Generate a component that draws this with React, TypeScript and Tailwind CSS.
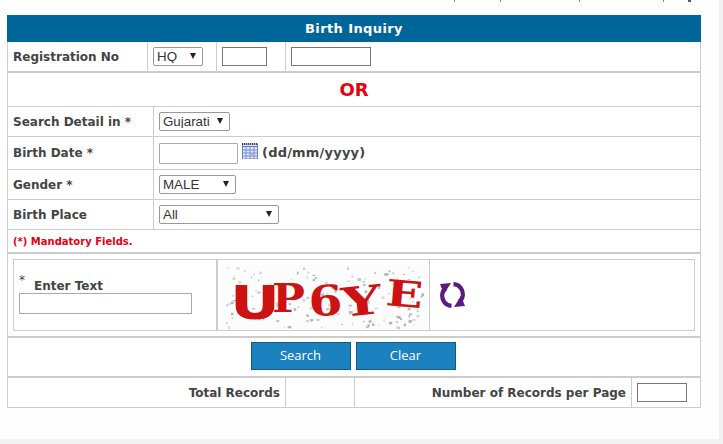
const verdana = "font-['DejaVu_Sans',sans-serif]"

// deterministic speckles for the captcha picture
let seed = 7
const rnd = () => {
  seed = (seed * 16807) % 2147483647
  return seed / 2147483647
}
const speckles = Array.from({ length: 170 }, () => ({
  x: 4 + rnd() * 198,
  y: 2 + rnd() * 60,
  w: 1 + rnd() * 2.5,
  h: 1 + rnd() * 2,
  o: 0.35 + rnd() * 0.6,
}))

function Label({ children }: { children: React.ReactNode }) {
  return <span className={`${verdana} text-[12px] font-bold text-[#444]`}>{children}</span>
}

function Select({ className, value }: { className: string; value: string }) {
  return (
    <div className={`relative h-[19px] ${className}`}>
      <select className="block h-full w-full appearance-none rounded-[2px] border border-[#999] bg-white pl-[3px] font-['Liberation_Sans',sans-serif] text-[13.33px] leading-none text-[#333]">
        <option>{value}</option>
      </select>
      <svg width="6" height="6" viewBox="0 0 6 6" className="pointer-events-none absolute right-[7px] top-[6px]">
        <path d="M0 0h6L3 6z" fill="#222" />
      </svg>
    </div>
  )
}

function FormRow({ label, height, children }: { label: string; height: string; children: React.ReactNode }) {
  return (
    <div className={`flex border-b border-[#ccc] ${height}`}>
      <div className="flex w-[146px] shrink-0 items-center border-r border-[#ccc] pl-[5px]">
        <Label>{label}</Label>
      </div>
      <div className="flex items-center pl-[5px]">{children}</div>
    </div>
  )
}

function CalendarIcon() {
  return (
    <svg width="16" height="16" viewBox="0 0 16 16" className="mb-[4px]">
      <rect x="0.5" y="1" width="15" height="15" fill="#e4eafb" stroke="#6a7fc0" />
      <path d="M0 1h16" stroke="#3d4658" strokeWidth="2" strokeDasharray="1 1" />
      <path d="M0 3.5h16" stroke="#5f78c4" />
      <path d="M0 7h16M0 10h16M0 13h16M4 3v13M8 3v13M12 3v13" stroke="#6f8ae0" strokeWidth="1" />
      <rect x="9" y="11" width="3" height="2" fill="#e8a070" />
    </svg>
  )
}

function RefreshIcon() {
  return (
    <svg width="25" height="26" viewBox="0 0 25 26" fill="none">
      <g stroke="#5c1a80" strokeWidth="4.2">
        <path d="M11.5 23.8C5 23.5 1.5 18 2.3 12C2.8 9 4.5 7 6 6" />
        <path d="M13.5 2.2C20 2.5 23.5 8 22.7 14C22.2 17 20.5 19 19 20" />
      </g>
      <g fill="#5c1a80">
        <path d="M0 2 11 1 4 12z" />
        <path d="M25 24 14 25 21 14z" />
      </g>
    </svg>
  )
}

function Captcha() {
  return (
    <svg width="205" height="64" viewBox="0 0 205 64" className="overflow-visible">
      <rect width="205" height="64" fill="#fcfcfc" />
      {speckles.map((s, i) => (
        <rect key={i} x={s.x} y={s.y} width={s.w} height={s.h} fill="#9fada8" opacity={s.o} />
      ))}
      <g fill="#cc1212" fontFamily="'DejaVu Serif', serif" fontWeight="bold">
        <text x="8" y="54" fontFamily="'DejaVu Sans', sans-serif" fontSize="46" textLength="50" lengthAdjust="spacingAndGlyphs">U</text>
        <text x="50" y="47" fontSize="40" textLength="33" lengthAdjust="spacingAndGlyphs">P</text>
        <text x="87" y="51" fontSize="42" textLength="34" lengthAdjust="spacingAndGlyphs" transform="rotate(-2 87 51)">6</text>
        <text x="121" y="52" fontSize="40" textLength="40" lengthAdjust="spacingAndGlyphs" transform="rotate(-6 121 52)">Y</text>
        <text x="163" y="40" fontSize="36" textLength="37" lengthAdjust="spacingAndGlyphs" transform="rotate(5 163 40)">E</text>
      </g>
    </svg>
  )
}

export default function App() {
  return (
    <div className="flex h-[444px] w-[723px] flex-col overflow-hidden bg-[#f2f2f2]">
      <div className="mr-[4px] h-[439px] bg-[#fefefe] pl-[7px]">
        {/* bottom edge of the nav row that is cut off above the form */}
        <div className="flex h-[15px] items-start">
          <span className="ml-[447px] h-[2px] w-px bg-[#888]" />
          <span className="ml-[45px] h-[2px] w-px bg-[#888]" />
          <span className="ml-[78px] h-[2px] w-px bg-[#888]" />
          <span className="ml-[83px] h-[2px] w-px bg-[#888]" />
          <span className="ml-[24px] h-[2px] w-[3px] bg-[#557]" />
        </div>

        <div className="w-[694px] border-x border-b border-[#ccc] bg-white">
          <div className={`${verdana} -mx-px flex h-[27px] items-center justify-center bg-[#006699] text-[13px] font-bold tracking-[0.4px] text-white`}>
            Birth Inquiry
          </div>

          <div className="flex h-[31px] border-b-2 border-[#ccc]">
            <div className="flex w-[140px] items-center border-r border-[#ccc] pl-[5px] pt-[1px]">
              <Label>Registration No</Label>
            </div>
            <div className="flex w-[69px] items-center border-r border-[#ccc] pl-[5px]">
              <Select className="w-[50px]" value="HQ" />
            </div>
            <div className="flex w-[69px] items-center border-r border-[#ccc] pl-[5px]">
              <input className="h-[19px] w-[45px] border border-[#777]" />
            </div>
            <div className="flex items-center pl-[5px]">
              <input className="h-[19px] w-[80px] border border-[#777]" />
            </div>
          </div>

          <div className={`${verdana} flex h-[34px] items-center justify-center border-b border-[#ccc] text-[18px] font-bold text-[#e60012]`}>
            OR
          </div>

          <FormRow label="Search Detail in *" height="h-[30px]">
            <Select className="w-[71px]" value="Gujarati" />
          </FormRow>
          <FormRow label="Birth Date *" height="h-[33px]">
            <input className="h-[21px] w-[79px] rounded-[1px] border border-[#aaa]" />
            <span className="ml-[4px]"><CalendarIcon /></span>
            <span className={`${verdana} ml-[4px] text-[13px] font-bold tracking-[0.2px] text-[#444]`}>(dd/mm/yyyy)</span>
          </FormRow>
          <FormRow label="Gender *" height="h-[30px]">
            <Select className="w-[77px]" value="MALE" />
          </FormRow>
          <FormRow label="Birth Place" height="h-[30px]">
            <Select className="w-[120px]" value="All" />
          </FormRow>

          <div className={`${verdana} flex h-[24px] items-center border-b-2 border-[#ccc] pl-[5px] text-[10px] font-bold text-[#e60012]`}>
            (*) Mandatory Fields.
          </div>

          <div className="flex h-[84px] border-b-2 border-[#ccc] px-[5px] pt-[5px]">
            <div className="flex h-[72px] w-full border border-[#ccc]">
              <div className="w-[204px] border-r-2 border-[#ccc] px-[5px] pt-[14px]">
                <div className="flex h-[19px]">
                  <span className={`${verdana} text-[12px] leading-[12px] text-[#444]`}>*</span>
                  <span className="ml-[9px] mt-[-2px]"><Label>Enter Text</Label></span>
                </div>
                <input className="block h-[21px] w-[173px] border border-[#aaa]" />
              </div>
              <div className="w-[212px] border-r border-[#ccc] pl-[4px] pt-[5px]">
                <Captcha />
              </div>
              <div className="flex items-center pl-[10px]">
                <RefreshIcon />
              </div>
            </div>
          </div>

          <div className="flex h-[40px] items-center justify-center gap-[5px] border-b-2 border-[#ccc] pb-[3px] pr-[2px]">
            <button className="h-[28px] w-[100px] border border-[#0f5c8a] bg-[#1c81bf] pt-[1px] font-['Open_Sans',sans-serif] text-[13px] text-white">Search</button>
            <button className="h-[28px] w-[100px] border border-[#0f5c8a] bg-[#1c81bf] pt-[1px] font-['Open_Sans',sans-serif] text-[13px] text-white">Clear</button>
          </div>

          <div className="flex h-[29px]">
            <div className="flex w-[278px] items-center justify-end border-r border-[#ccc] pr-[5px]">
              <Label>Total Records</Label>
            </div>
            <div className="w-[69px] border-r border-[#ccc]" />
            <div className="flex w-[277px] items-center justify-end border-r border-[#ccc] pr-[5px]">
              <Label>Number of Records per Page</Label>
            </div>
            <div className="flex items-center pl-[5px]">
              <input className="h-[19px] w-[50px] border border-[#777]" />
            </div>
          </div>
        </div>
      </div>
    </div>
  )
}
